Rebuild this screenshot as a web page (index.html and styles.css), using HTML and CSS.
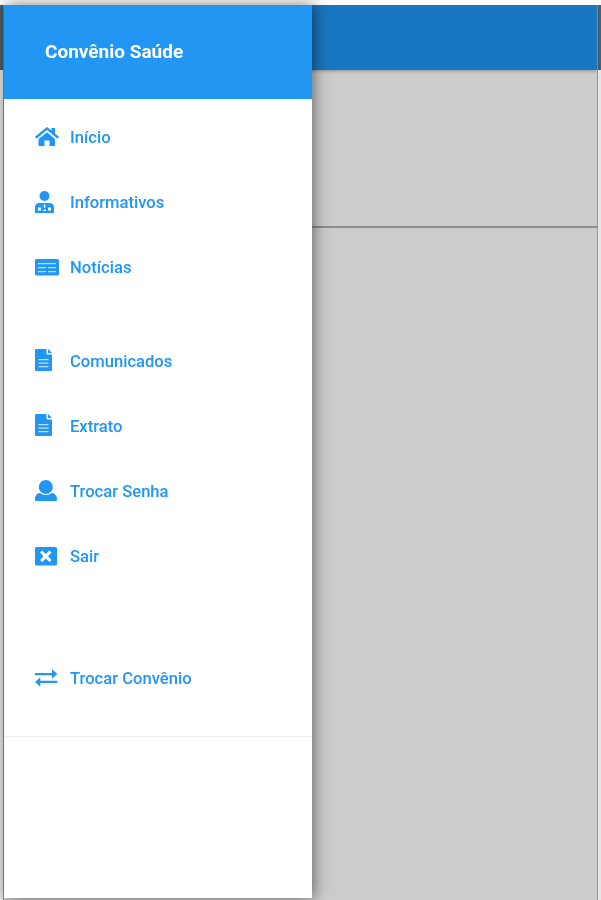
FILE: index.html
```html
<!DOCTYPE html>
<html lang="pt-br">
<head>
  <meta charset="UTF-8">
  <meta name="viewport" content="width=device-width, initial-scale=1.0">
  <title>Convênio Saúde</title>
  <link rel="stylesheet" href="styles.css">
</head>
<body>

<div class="screen">
  <div class="app">
    <div class="app-bar"></div>
    <div class="app-band"></div>
  </div>

  <nav class="drawer">
    <div class="drawer-header">Convênio Saúde</div>

    <div class="menu">
      <a class="item">
        <svg class="icon" viewBox="0 0 24 24"><path d="M12 2 0 11.800l1.500 1.900L12 5l10.500 8.700 1.500-1.900-4-3.300V3h-3.500v2.600z"/><path d="M12 7.200 3.500 14v7h6v-5.500h5V21h5.500v-7z"/></svg>
        <span>Início</span>
      </a>
      <a class="item">
        <svg class="icon" viewBox="0 0 24 24"><circle cx="9.500" cy="6" r="5"/><path d="M0 23v-6c0-2.500 2-4 4.500-4h10c2.500 0 4.500 1.500 4.500 4v6z"/><path class="cut" d="M3 20.500h3v-3H3zM13 20.500h3v-3h-3zM8.700 18h1.600v-3.500H8.700zM8 21h3v-1.200H8z"/></svg>
        <span>Informativos</span>
      </a>
      <a class="item">
        <svg class="icon" viewBox="0 0 24 24"><path d="M1.500 4h21a1.500 1.500 0 0 1 1.500 1.500V19a1.500 1.500 0 0 1-1.500 1.500h-21A1.500 1.500 0 0 1 0 19V5.500A1.500 1.500 0 0 1 1.500 4z"/><path class="soft" d="M3 8h18v1.200H3zM3 12h8v1.200H3zM13 12h8v1.200h-8zM3 16h8v1.200H3zM13 16h8v1.200h-8z"/></svg>
        <span>Notícias</span>
      </a>

      <a class="item group">
        <svg class="icon" viewBox="0 0 24 24"><path d="M1 0h10.500v4.500a1 1 0 0 0 1 1H17V21a1 1 0 0 1-1 1H1a1 1 0 0 1-1-1V1a1 1 0 0 1 1-1z"/><path d="M13 0l4 4h-4z"/><path class="soft" d="M3.500 10h10v1.200h-10zM3.500 13.500h10v1.200h-10zM3.500 17h10v1.200h-10z"/></svg>
        <span>Comunicados</span>
      </a>
      <a class="item">
        <svg class="icon" viewBox="0 0 24 24"><path d="M1 0h10.500v4.500a1 1 0 0 0 1 1H17V21a1 1 0 0 1-1 1H1a1 1 0 0 1-1-1V1a1 1 0 0 1 1-1z"/><path d="M13 0l4 4h-4z"/><path class="soft" d="M3.500 10h10v1.200h-10zM3.500 13.500h10v1.200h-10zM3.500 17h10v1.200h-10z"/></svg>
        <span>Extrato</span>
      </a>
      <a class="item">
        <svg class="icon" viewBox="0 0 24 24"><circle cx="10.800" cy="8" r="7"/><path d="M0 20c0-3 2-6 5-6 1.500 1.200 3.500 2 5.800 2s4.500-.8 6-2c3 0 5.200 3 5.200 6v1a1 1 0 0 1-1 1H1a1 1 0 0 1-1-1z"/></svg>
        <span>Trocar Senha</span>
      </a>
      <a class="item">
        <svg class="icon" viewBox="0 0 24 24"><rect x="0" y="3" width="22" height="18.500" rx="1.500"/><path class="cut" d="M5 8.500 7.200 6.500 10.800 10 14.400 6.500 16.600 8.500 13 12.200 16.600 16 14.400 18 10.800 14.400 7.200 18 5 16 8.600 12.200z"/></svg>
        <span>Sair</span>
      </a>

      <a class="item group-wide">
        <svg class="icon" viewBox="0 0 24 24"><path d="M0 7h17V3.200L22.300 8 17 12.800V9.200H0z"/><path d="M22.300 14.800H5.300V11.200L0 16l5.300 4.800V17h17z"/></svg>
        <span>Trocar Convênio</span>
      </a>
    </div>

    <div class="divider"></div>
  </nav>
</div>

</body>
</html>
```

FILE: styles.css
```css
* {
  box-sizing: border-box;
}

body {
  margin: 0;
  background-color: #fff;
  font-family: 'Roboto', sans-serif;
}

.screen {
  position: relative;
  height: 900px;
  padding: 5px 3px 0 3px;
  background: linear-gradient(#4d6068 70px, #e6e6e6 70px);
  filter: blur(0.6px);
  overflow: hidden;
}

.screen::before {
  content: '';
  position: absolute;
  top: 0;
  left: 0;
  right: 0;
  height: 5px;
  background-color: #fff;
}

.app {
  height: 100%;
  background-color: #ccc;
  border-left: 1px solid #8f8f8f;
  border-right: 1px solid #969696;
}

.app-bar {
  height: 65px;
  background-color: #1976c0;
  box-shadow: 0 1px 3px rgba(0, 0, 0, 0.3);
}

.app-band {
  height: 158px;
  border-bottom: 2px solid #8c8c8c;
}

.drawer {
  position: absolute;
  top: 5px;
  bottom: 2px;
  left: 4px;
  width: 308px;
  background-color: #fff;
  box-shadow: 2px 0 14px rgba(0, 0, 0, 0.5);
}

.drawer-header {
  display: flex;
  align-items: center;
  height: 94px;
  padding: 0 0 2px 41px;
  margin-bottom: 6px;
  background-color: #2196f3;
  color: #fff;
  font-size: 19px;
  font-weight: 700;
}

.item {
  display: flex;
  align-items: center;
  height: 65px;
  padding-left: 31px;
  color: #2196f3;
  font-size: 16.6px;
  font-weight: 500;
}

.item.group {
  margin-top: 29px;
}

.item.group-wide {
  margin-top: 57px;
}

.icon {
  width: 24px;
  height: 24px;
  margin: -2px 11px 0 0;
  fill: #2196f3;
}

.icon .cut {
  fill: #fff;
}

.icon .soft {
  fill: #bfe0fb;
}

.divider {
  height: 1px;
  margin-top: 25px;
  background-color: #eee;
}
```
